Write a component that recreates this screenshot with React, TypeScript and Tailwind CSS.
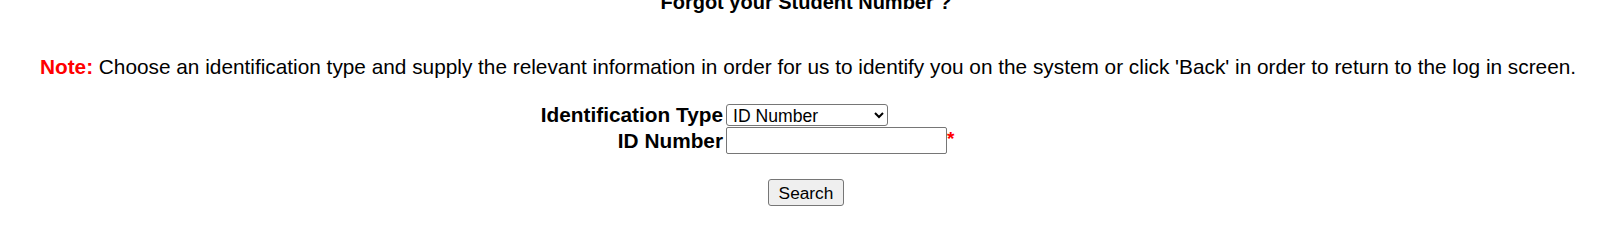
export default function App() {
  return (
    <div className="min-h-screen bg-white text-black font-['Liberation_Sans',Arial,sans-serif]">
      <div className="flex flex-col items-center pl-[16px]">
        <h2 className="-ml-[4px] -mt-[10px] text-[20px] font-bold leading-[24px]">Forgot your Student Number ?</h2>

        <p className="mt-[41px] whitespace-nowrap text-[20.8px] leading-[24px]">
          <span className="font-bold text-[#ff0000]">Note:</span> Choose an identification type and supply the relevant
          information in order for us to identify you on the system or click 'Back' in order to return to the log in
          screen.
        </p>

        <div className="mt-[25px] grid grid-cols-[200px_364px] text-[20.8px]">
          <div className="whitespace-nowrap pr-[3px] text-right font-bold leading-[22px]">Identification Type</div>
          <div className="flex">
            <select className="h-[22px] w-[162px] rounded-[3px] border border-[#767676] bg-white pl-[2px] text-[17.6px] leading-[20px]">
              <option>ID Number</option>
              <option>Passport Number</option>
            </select>
          </div>

          <div className="mt-[1px] whitespace-nowrap pr-[3px] text-right font-bold leading-[27px]">ID Number</div>
          <div className="mt-[1px] flex items-start">
            <input
              type="text"
              className="h-[27px] w-[221px] rounded-[2px] border border-[#767676] bg-white px-1 text-[17.3px]"
            />
            <span className="mt-[3px] text-[19px] font-bold leading-[18px] text-[#ff0000]">*</span>
          </div>
        </div>

        <button className="-ml-[4px] mt-[25px] h-[27px] w-[76px] rounded-[3px] border border-[#767676] bg-[#efefef] text-[17.3px] leading-[20px]">
          Search
        </button>
      </div>
    </div>
  );
}
